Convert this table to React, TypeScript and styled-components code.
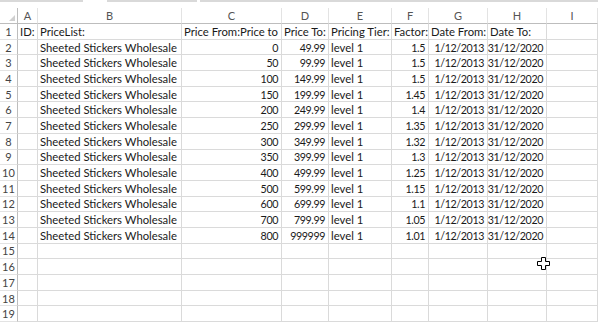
import React from 'react';
import styled, { createGlobalStyle } from 'styled-components';

const GlobalStyle = createGlobalStyle`
  html, body {
    margin: 0;
    padding: 0;
    background: #ffffff;
  }
  body {
    font-family: Lato, "Open Sans", sans-serif;
    overflow: hidden;
  }
`;

const COLS = '18px 20px 144px 100px 47px 63px 37px 59px 59px 1fr';

const Page = styled.div`
  position: relative;
  width: 598px;
  height: 323px;
  overflow: hidden;
`;

const TopStrip = styled.div`
  display: flex;
  height: 2px;
  margin-bottom: 6px;
`;

const StripPart = styled.div<{ $w: string }>`
  flex: ${(p) => p.$w};
  background: #d9d9d9;
`;

const Gap = styled.div<{ $w: number }>`
  width: ${(p) => p.$w}px;
`;

const Grid = styled.div`
  display: grid;
  grid-template-columns: ${COLS};
  grid-template-rows: 16px;
  grid-auto-rows: 15.7px;
`;

const ColHead = styled.div`
  display: flex;
  align-items: center;
  justify-content: center;
  font-size: 11px;
  color: #555;
  border-right: 1px solid #e3e3e3;
  border-bottom: 1px solid #bdbdbd;
  box-sizing: border-box;
`;

const Corner = styled(ColHead)`
  position: relative;
  border-right: 1px solid #bdbdbd;
  &::after {
    content: '';
    position: absolute;
    right: 2px;
    bottom: 2px;
    border-left: 6px solid transparent;
    border-bottom: 6px solid #d0d0d0;
  }
`;

const RowHead = styled.div`
  display: flex;
  align-items: center;
  justify-content: center;
  font-size: 11px;
  color: #444;
  border-right: 1px solid #bdbdbd;
  border-bottom: 1px solid #e3e3e3;
  box-sizing: border-box;
`;

const Cell = styled.div<{ $num?: boolean }>`
  display: flex;
  align-items: center;
  justify-content: ${(p) => (p.$num ? 'flex-end' : 'flex-start')};
  padding: 0 ${(p) => (p.$num ? '3px' : '2px')} 0 2px;
  font-size: ${(p) => (p.$num ? '10.7px' : '11.3px')};
  letter-spacing: ${(p) => (p.$num ? '-0.4px' : '0')};
  color: #1a1a1a;
  white-space: nowrap;
  overflow: visible;
  border-right: 1px solid #dadada;
  border-bottom: 1px solid #dadada;
  box-sizing: border-box;
`;

const Cursor = styled.svg`
  position: absolute;
  left: 537px;
  top: 257px;
`;

const letters = ['A', 'B', 'C', 'D', 'E', 'F', 'G', 'H', 'I'];

const headers = ['ID:', 'PriceList:', 'Price From:Price to', 'Price To:', 'Pricing Tier:', 'Factor:', 'Date From:', 'Date To:', ''];

const prices: [string, string, string][] = [
  ['0', '49.99', '1.5'],
  ['50', '99.99', '1.5'],
  ['100', '149.99', '1.5'],
  ['150', '199.99', '1.45'],
  ['200', '249.99', '1.4'],
  ['250', '299.99', '1.35'],
  ['300', '349.99', '1.32'],
  ['350', '399.99', '1.3'],
  ['400', '499.99', '1.25'],
  ['500', '599.99', '1.15'],
  ['600', '699.99', '1.1'],
  ['700', '799.99', '1.05'],
  ['800', '999999', '1.01'],
];

const App = () => {
  const rows: { text: string; num?: boolean }[][] = [];
  rows.push(headers.map((h) => ({ text: h })));
  prices.forEach(([from, to, factor]) => {
    rows.push([
      { text: '' },
      { text: 'Sheeted Stickers Wholesale' },
      { text: from, num: true },
      { text: to, num: true },
      { text: 'level 1' },
      { text: factor, num: true },
      { text: '1/12/2013', num: true },
      { text: '31/12/2020', num: true },
      { text: '' },
    ]);
  });
  while (rows.length < 19) {
    rows.push(letters.map(() => ({ text: '' })));
  }

  return (
    <Page>
      <GlobalStyle />
      <TopStrip>
        <StripPart $w="0 0 83px" />
        <Gap $w={24} />
        <StripPart $w="0 0 90px" />
        <Gap $w={3} />
        <StripPart $w="1" />
      </TopStrip>
      <Grid>
        <Corner />
        {letters.map((l) => (
          <ColHead key={l}>{l}</ColHead>
        ))}
        {rows.map((row, i) => (
          <React.Fragment key={i}>
            <RowHead>{i + 1}</RowHead>
            {row.map((c, j) => (
              <Cell key={j} $num={c.num}>
                {c.text}
              </Cell>
            ))}
          </React.Fragment>
        ))}
      </Grid>
      <Cursor width="13" height="13" viewBox="0 0 13 13">
        <path
          d="M4.5 0.5 H8.5 V4.5 H12.5 V8.5 H8.5 V12.5 H4.5 V8.5 H0.5 V4.5 H4.5 Z"
          fill="#ffffff"
          stroke="#000000"
          strokeWidth="1"
        />
      </Cursor>
    </Page>
  );
};

export default App;
